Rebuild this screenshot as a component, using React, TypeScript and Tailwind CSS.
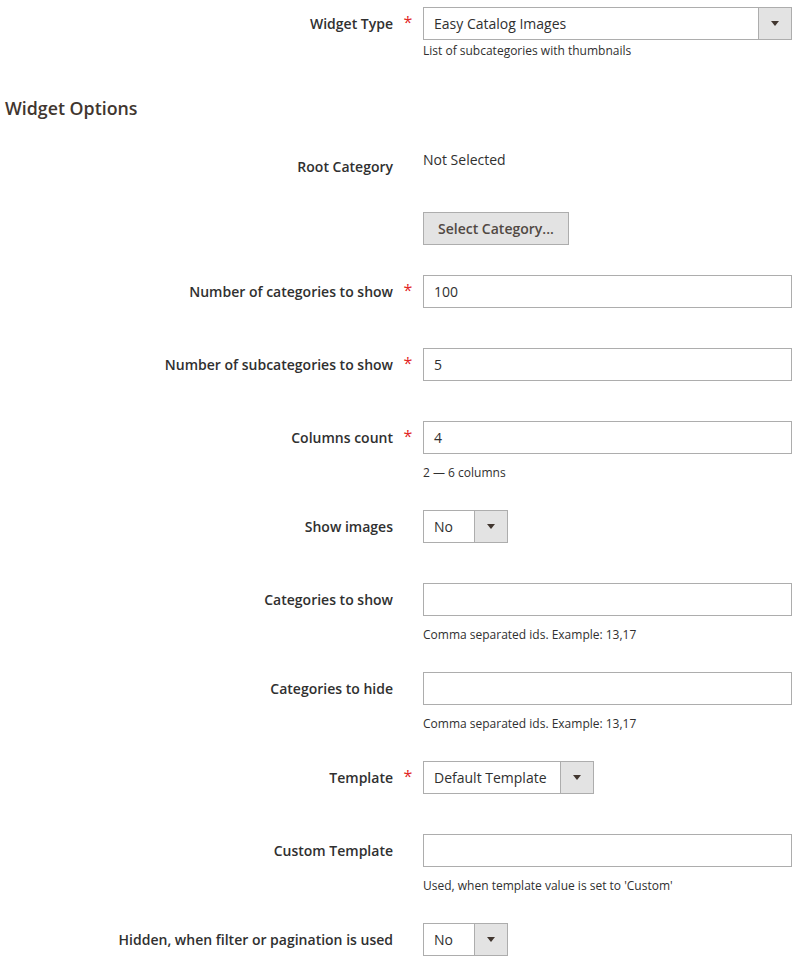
import React from "react";

const Arrow = () => (
  <span className="block w-0 h-0 border-l-[4px] border-r-[4px] border-t-[5px] border-l-transparent border-r-transparent border-t-[#41362f]" />
);

function Select({ value, width }: { value: string; width: string }) {
  return (
    <div className={`flex h-[33px] border border-[#adadad] bg-white ${width}`}>
      <div className="flex-1 pl-[10px] text-[14px] leading-[31px] text-[#303030] whitespace-nowrap">{value}</div>
      <div className="w-[33px] flex items-center justify-center bg-[#e3e3e3] border-l border-[#adadad]">
        <Arrow />
      </div>
    </div>
  );
}

function Input({ value }: { value?: string }) {
  return (
    <div className="h-[33px] w-full border border-[#adadad] bg-white pl-[10px] text-[14px] leading-[31px] text-[#303030]">
      {value ?? ""}
    </div>
  );
}

function Field({
  label,
  required,
  children,
  note,
  noteMt = "mt-[11px]",
  mb = "",
}: {
  label: string;
  required?: boolean;
  children: React.ReactNode;
  note?: string;
  noteMt?: string;
  mb?: string;
}) {
  return (
    <div className={`flex ${mb}`}>
      <div className="w-[393px] shrink-0 text-right pt-[7px] text-[14px] leading-[19px] font-semibold text-[#303030]">
        {label}
      </div>
      <div className="w-[30px] shrink-0 flex justify-center pt-[6px]">
        {required && <span className="text-[#e22626] text-[16px] leading-[19px] font-normal">*</span>}
      </div>
      <div className="w-[369px] shrink-0">
        {children}
        {note && (
          <div className={`${noteMt} text-[12px] leading-[16px] text-[#303030]`}>{note}</div>
        )}
      </div>
    </div>
  );
}

export default function App() {
  return (
    <div
      className="w-[800px] h-[960px] bg-white overflow-hidden pt-[7px]"
      style={{ fontFamily: '"Open Sans", "Liberation Sans", sans-serif' }}
    >
      <Field
        label="Widget Type"
        required
        note="List of subcategories with thumbnails"
        noteMt="mt-[3px]"
      >
        <Select value="Easy Catalog Images" width="w-full" />
      </Field>

      <div className="mt-[37px] pl-[5px] text-[17.8px] leading-[24px] font-semibold text-[#41362f]">
        Widget Options
      </div>

      <div className="flex mt-[30px]">
        <div className="w-[393px] shrink-0 text-right pt-[7px] text-[14px] leading-[19px] font-semibold text-[#303030]">
          Root Category
        </div>
        <div className="w-[30px] shrink-0" />
        <div className="w-[369px] shrink-0">
          <div className="text-[14px] leading-[19px] text-[#303030]">Not Selected</div>
          <button className="block mt-[43px] h-[33px] px-[14px] border border-[#adadad] bg-[#e3e3e3] text-[14px] font-semibold text-[#514943] leading-[31px]">
            Select Category...
          </button>
        </div>
      </div>

      <div className="mt-[30px]">
        <Field label="Number of categories to show" required mb="mb-[40px]">
          <Input value="100" />
        </Field>
        <Field label="Number of subcategories to show" required mb="mb-[40px]">
          <Input value="5" />
        </Field>
        <Field label="Columns count" required note="2 — 6 columns" mb="mb-[29px]">
          <Input value="4" />
        </Field>
        <Field label="Show images" mb="mb-[40px]">
          <Select value="No" width="w-[85px]" />
        </Field>
        <Field label="Categories to show" note="Comma separated ids. Example: 13,17" mb="mb-[29px]">
          <Input />
        </Field>
        <Field label="Categories to hide" note="Comma separated ids. Example: 13,17" mb="mb-[29px]">
          <Input />
        </Field>
        <Field label="Template" required mb="mb-[40px]">
          <Select value="Default Template" width="w-[171px]" />
        </Field>
        <Field label="Custom Template" note="Used, when template value is set to 'Custom'" mb="mb-[29px]">
          <Input />
        </Field>
        <Field label="Hidden, when filter or pagination is used">
          <Select value="No" width="w-[85px]" />
        </Field>
      </div>
    </div>
  );
}
